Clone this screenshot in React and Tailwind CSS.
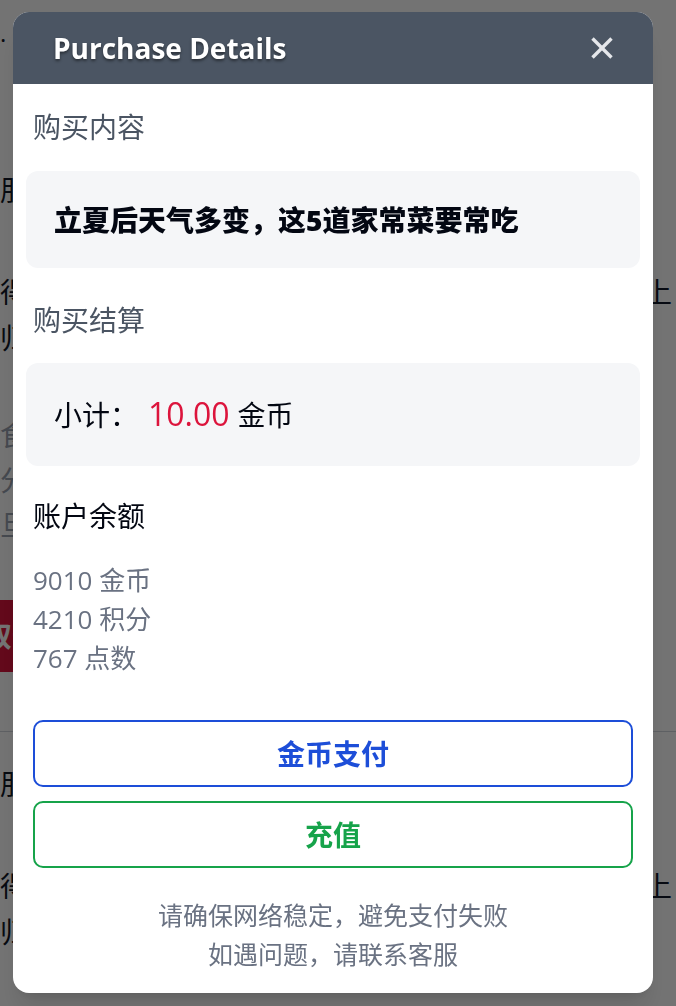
import { useState } from 'react';

const FONT = "font-['Open_Sans','Noto_Sans_CJK_SC',sans-serif]";

const articles = [
  {
    title: '朋友圈热传的夏季养生小妙招',
    body: ['得了解这些饮食习惯，才能吃出健康好身体，夏天马上', '归纳几条简单实用的方法，推荐给家中的长辈和读者'],
    note: ['食材搭配讲究营养均衡，清淡少油更适合夏天的体', '分量控制也很重要，少食多餐可以让肠胃更轻易', '旦有不适请及时就医'],
  },
  {
    title: '朋友们都在学的家常菜做法',
    body: ['得先准备好新鲜的食材，再按照步骤慢慢做起来，马上', '归来就能给家人做一桌好菜，适合新手和厨房爱好者'],
    note: ['食材搭配讲究营养均衡，清淡少油更适合夏天的体', '分量控制也很重要，少食多餐可以让肠胃更轻易', '旦有不适请及时就医'],
  },
];

function ArticleItem({ article }) {
  return (
    <div className="border-b border-gray-300 pt-8 pb-[59px]">
      <p className="whitespace-nowrap text-[28px] leading-[40px] text-gray-900">{article.title}</p>
      <div className="mt-[59px] text-[28px] leading-[46px] text-gray-900">
        {article.body.map((line) => (
          <p key={line} className="whitespace-nowrap">{line}</p>
        ))}
      </div>
      <div className="mt-[52px] text-[28px] leading-[45px] text-gray-400">
        {article.note.map((line) => (
          <p key={line} className="whitespace-nowrap">{line}</p>
        ))}
      </div>
      <div className="mt-[52px] flex h-[72px] w-[220px] items-center bg-[#dc143c] text-[28px] font-bold text-white">
        <span className="-ml-4">双击查看全文</span>
      </div>
    </div>
  );
}

function CloseIcon() {
  return (
    <svg width="24" height="24" viewBox="0 0 24 24" fill="none" stroke="currentColor" strokeWidth="3.4">
      <path d="M2.5 2.5 21.5 21.5" />
      <path d="M21.5 2.5 2.5 21.5" />
    </svg>
  );
}

export default function App() {
  const [open, setOpen] = useState(true);

  return (
    <div className={`${FONT} relative h-[1006px] w-full overflow-hidden bg-white`}>
      {/* page behind the dialog */}
      <div className="h-[138px] pt-4 text-[24px] leading-[34px] text-gray-900">
        <p className="whitespace-nowrap">.</p>
      </div>
      {articles.map((article) => (
        <ArticleItem key={article.title} article={article} />
      ))}

      {open && (
        <div className="fixed inset-0 bg-black/55 pl-[13px] pt-[12px]">
          <div className="w-[640px] overflow-hidden rounded-2xl bg-white shadow-xl">
            <div className="flex h-[72px] items-center justify-between bg-[#4b5563] pl-[40px] pr-[39px]">
              <h1 className="text-[28px] font-bold text-white [text-shadow:0_2px_3px_rgba(0,0,0,0.45)]">
                Purchase Details
              </h1>
              <button type="button" onClick={() => setOpen(false)} className="text-gray-200">
                <CloseIcon />
              </button>
            </div>

            <div className="px-5 pt-[22px] pb-[19px]">
              <h2 className="text-[28px] leading-[42px] text-[#4b5563]">购买内容</h2>
              <div className="-mx-[7px] mt-[23px] flex h-[97px] items-center rounded-xl bg-[#f5f6f8] pl-7">
                <p className="text-[28px] font-extrabold leading-[42px] text-gray-950">立夏后天气多变，这5道家常菜要常吃</p>
              </div>

              <h2 className="mt-[31px] text-[28px] leading-[42px] text-[#4b5563]">购买结算</h2>
              <div className="-mx-[7px] mt-[22px] flex h-[103px] items-center rounded-xl bg-[#f5f6f8] pl-7">
                <p className="flex items-baseline text-[28px] leading-[42px] text-gray-950">
                  <span>小计：</span>
                  <span className="ml-[10px] text-[32px] text-[#dc143c]">10.00</span>
                  <span className="ml-2">金币</span>
                </p>
              </div>

              <h3 className="mt-[29px] text-[28px] leading-[42px] text-gray-950">账户余额</h3>
              <div className="mt-[24px] text-[26px] leading-[39px] text-gray-500">
                <p>9010 金币</p>
                <p>4210 积分</p>
                <p>767 点数</p>
              </div>

              <div className="mt-[42px] flex flex-col gap-[14px]">
                <button type="button" className="h-[67px] rounded-[10px] border-2 border-[#1d4ed8] text-[28px] font-bold text-[#1d4ed8]">
                  金币支付
                </button>
                <button type="button" className="h-[67px] rounded-[10px] border-2 border-[#16a34a] text-[28px] font-bold text-[#16a34a]">
                  充值
                </button>
              </div>

              <div className="mt-[28px] text-center text-[25px] leading-[39px] text-gray-500">
                <p>请确保网络稳定，避免支付失败</p>
                <p>如遇问题，请联系客服</p>
              </div>
            </div>
          </div>
        </div>
      )}
    </div>
  );
}
